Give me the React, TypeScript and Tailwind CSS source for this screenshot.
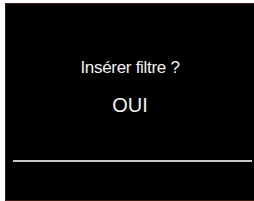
export default function App() {
  return (
    <div className="w-[254px] h-[201px] bg-white pl-[5px] pt-[3px] overflow-hidden">
      <div className="h-[198px] bg-black border-l border-t border-b border-[#3b1c14] flex flex-col items-center text-[#f2f2f2] font-['Liberation_Sans',Arial,sans-serif]">
        <div className="mt-[54px] text-[17px] leading-[20px] tracking-[-0.3px]">Insérer filtre ?</div>
        <div className="mt-[15px] text-[20px] leading-[24px]">OUI</div>
        <div className="mt-[43px] self-stretch ml-[7px] mr-[2px] h-[2px] bg-[#c9c9c9]" />
      </div>
    </div>
  );
}
